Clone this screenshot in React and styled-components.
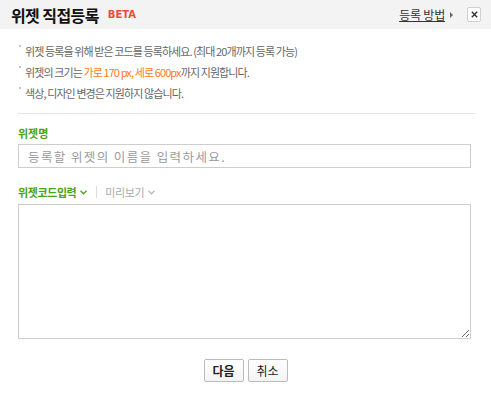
import React from 'react';
import styled, { createGlobalStyle } from 'styled-components';

const GlobalStyle = createGlobalStyle`
  html, body {
    margin: 0;
    padding: 0;
    background: #fff;
  }
  body {
    font-family: "Noto Sans CJK KR", "Noto Sans", sans-serif;
  }
`;

const Dialog = styled.div`
  width: 491px;
  height: 396px;
  background: #fff;
  display: flex;
  flex-direction: column;
`;

const Header = styled.div`
  height: 29px;
  background: #f3f3f3;
  display: flex;
  align-items: center;
  padding: 0 10px 0 11px;
  box-sizing: border-box;
`;

const Title = styled.h1`
  margin: 0;
  font-size: 16px;
  font-weight: 700;
  color: #111;
  letter-spacing: -0.6px;
`;

const Beta = styled.span`
  margin-left: 9px;
  font-family: "DejaVu Sans", sans-serif;
  font-size: 10px;
  font-weight: 700;
  color: #f0463c;
`;

const HeaderRight = styled.div`
  margin-left: auto;
  display: flex;
  align-items: center;
`;

const HelpLink = styled.a`
  font-size: 12px;
  color: #333;
  text-decoration: underline;
  letter-spacing: -0.2px;
`;

const Arrow = styled.span`
  margin-left: 5px;
  width: 0;
  height: 0;
  border-top: 3px solid transparent;
  border-bottom: 3px solid transparent;
  border-left: 3px solid #666;
`;

const CloseButton = styled.button`
  appearance: none;
  margin-left: 14px;
  width: 14px;
  height: 15px;
  padding: 0;
  border: 1px solid #cfcfcf;
  border-radius: 2px;
  background: #fff;
  display: flex;
  align-items: center;
  justify-content: center;
  box-sizing: border-box;
`;

const Body = styled.div`
  padding: 12px 18px 0 18px;
  display: flex;
  flex-direction: column;
`;

const Notes = styled.ul`
  list-style: none;
  margin: 0;
  padding: 0 0 9px 0;
  border-bottom: 1px solid #e5e5e5;
  margin-right: -2px;
`;

const Note = styled.li`
  position: relative;
  padding-left: 7px;
  font-size: 11px;
  line-height: 21px;
  color: #666;
  letter-spacing: -0.9px;

  &::before {
    content: '';
    position: absolute;
    left: 1px;
    top: 4px;
    width: 2px;
    height: 2px;
    background: #c4c4c4;
  }
`;

const Accent = styled.span`
  color: #ff7a1a;
`;

const Label = styled.div`
  margin-top: 12px;
  font-size: 11px;
  font-weight: 700;
  color: #4aa314;
  line-height: 14px;
`;

const TextInput = styled.input`
  margin-top: 4px;
  width: 453px;
  height: 24px;
  box-sizing: border-box;
  border: 1px solid #cdcdcd;
  padding: 0 9px;
  font-family: "Noto Sans CJK KR", sans-serif;
  font-size: 12.5px;
  outline: none;

  &::placeholder {
    color: #9a9a9a;
    letter-spacing: 1.4px;
  }
`;

const Tabs = styled.div`
  margin-top: 17px;
  display: flex;
  align-items: center;
  height: 14px;
`;

const Tab = styled.span`
  display: flex;
  align-items: center;
  gap: 4px;
  font-size: 11px;
  font-weight: ${p => (p.$active ? 700 : 400)};
  color: ${p => (p.$active ? '#4aa314' : '#aaa')};
  letter-spacing: -0.4px;
`;

const TabDivider = styled.span`
  width: 1px;
  height: 12px;
  background: #ddd;
  margin: 0 8px 0 9px;
`;

const CodeArea = styled.textarea`
  display: block;
  margin-top: 5px;
  width: 453px;
  height: 135px;
  box-sizing: border-box;
  border: 1px solid #cdcdcd;
  resize: both;
  outline: none;
`;

const Actions = styled.div`
  margin-top: 20px;
  display: flex;
  justify-content: center;
  gap: 4px;
`;

const Button = styled.button`
  appearance: none;
  width: 40px;
  height: 23px;
  box-sizing: border-box;
  border: 1px solid #bbb;
  border-radius: 2px;
  background: linear-gradient(#fff, #f3f3f3);
  font-family: "Noto Sans CJK KR", sans-serif;
  font-size: 12px;
  font-weight: ${p => (p.$primary ? 700 : 400)};
  color: #222;
  padding: 0;
`;

const Chevron = ({ color }) => (
  <svg width="7" height="5" viewBox="0 0 7 5">
    <path d="M0.5 0.8 L3.5 3.8 L6.5 0.8" fill="none" stroke={color} strokeWidth="1.3" />
  </svg>
);

export default function App() {
  return (
    <Dialog>
      <GlobalStyle />
      <Header>
        <Title>위젯 직접등록</Title>
        <Beta>BETA</Beta>
        <HeaderRight>
          <HelpLink>등록 방법</HelpLink>
          <Arrow />
          <CloseButton aria-label="닫기">
            <svg width="7" height="7" viewBox="0 0 7 7">
              <path d="M0.8 0.8 L6.2 6.2 M6.2 0.8 L0.8 6.2" stroke="#333" strokeWidth="1.4" />
            </svg>
          </CloseButton>
        </HeaderRight>
      </Header>
      <Body>
        <Notes>
          <Note>위젯 등록을 위해 받은 코드를 등록하세요. (최대 20개까지 등록 가능)</Note>
          <Note>
            위젯의 크기는 <Accent>가로 170 px, 세로 600px</Accent>까지 지원합니다.
          </Note>
          <Note>색상, 디자인 변경은 지원하지 않습니다.</Note>
        </Notes>
        <Label>위젯명</Label>
        <TextInput placeholder="등록할 위젯의 이름을 입력하세요." />
        <Tabs>
          <Tab $active>
            위젯코드입력 <Chevron color="#4aa314" />
          </Tab>
          <TabDivider />
          <Tab>
            미리보기 <Chevron color="#bbb" />
          </Tab>
        </Tabs>
        <CodeArea />
        <Actions>
          <Button $primary>다음</Button>
          <Button>취소</Button>
        </Actions>
      </Body>
    </Dialog>
  );
}
